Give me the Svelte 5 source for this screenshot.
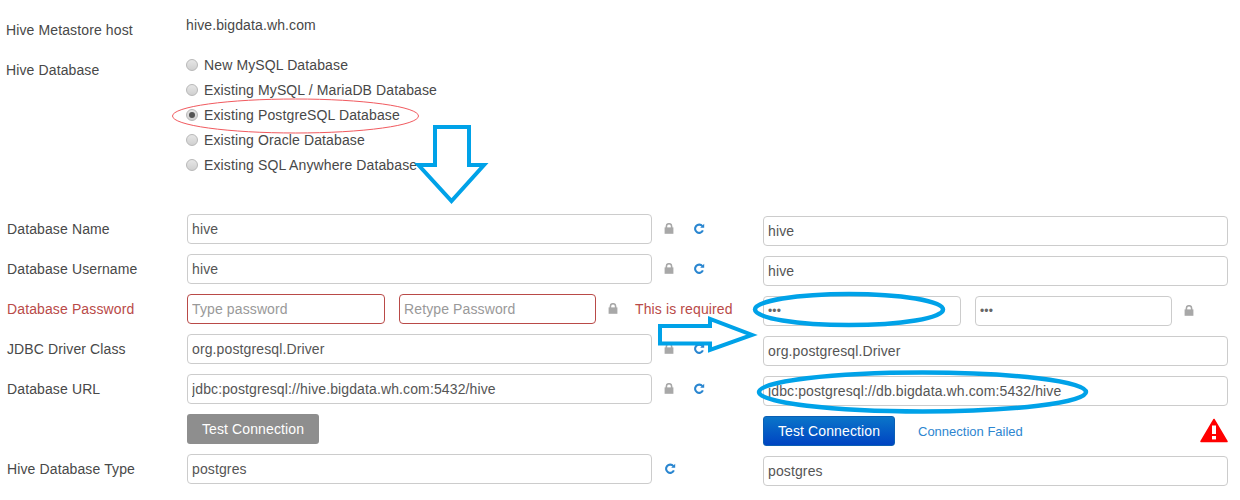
<script>
	const radios = [
		{ label: "New MySQL Database", on: false },
		{ label: "Existing MySQL / MariaDB Database", on: false },
		{ label: "Existing PostgreSQL Database", on: true },
		{ label: "Existing Oracle Database", on: false },
		{ label: "Existing SQL Anywhere Database", on: false },
	];
</script>

{#snippet lock()}
	<svg class="lock" width="10" height="11" viewBox="0 0 10 11">
		<path d="M2.400 5V3.300a2.600 2.600 0 0 1 5.200 0V5" fill="none" stroke="#a8a8a8" stroke-width="1.600" />
		<rect x="0.600" y="4.400" width="8.800" height="6.400" fill="#a8a8a8" />
	</svg>
{/snippet}

{#snippet refresh()}
	<svg class="refresh" width="12" height="12" viewBox="0 0 12 12">
		<path d="M9.400 3.200A4.100 4.100 0 1 0 9.900 7.400" fill="none" stroke="#2a86d0" stroke-width="2.100" />
		<path d="M7.200 4.800L11.200 4.800 11.200 0.800Z" fill="#2a86d0" />
	</svg>
{/snippet}

<div class="page">
	<div class="top">
		<div class="host">
			<span class="top-label">Hive Metastore host</span>
			<span class="host-value">hive.bigdata.wh.com</span>
		</div>
		<div class="db">
			<span class="top-label">Hive Database</span>
			<div class="radios">
				{#each radios as r}
					<div class="radio-row">
						<span class="radio" class:on={r.on}></span>
						<span>{r.label}</span>
					</div>
				{/each}
			</div>
		</div>
	</div>

	<div class="columns">
		<div class="col left">
			<div class="row">
				<span class="label">Database Name</span>
				<input class="field" value="hive" readonly />
				<div class="icons">{@render lock()}{@render refresh()}</div>
			</div>
			<div class="row">
				<span class="label">Database Username</span>
				<input class="field" value="hive" readonly />
				<div class="icons">{@render lock()}{@render refresh()}</div>
			</div>
			<div class="row">
				<span class="label error">Database Password</span>
				<input class="half bad" placeholder="Type password" readonly />
				<input class="half bad second" placeholder="Retype Password" readonly />
				<div class="icons">{@render lock()}</div>
				<span class="required">This is required</span>
			</div>
			<div class="row">
				<span class="label">JDBC Driver Class</span>
				<input class="field" value="org.postgresql.Driver" readonly />
				<div class="icons">{@render lock()}{@render refresh()}</div>
			</div>
			<div class="row">
				<span class="label">Database URL</span>
				<input class="field" value="jdbc:postgresql://hive.bigdata.wh.com:5432/hive" readonly />
				<div class="icons">{@render lock()}{@render refresh()}</div>
			</div>
			<div class="row">
				<span class="label"></span>
				<button class="btn off">Test Connection</button>
			</div>
			<div class="row">
				<span class="label">Hive Database Type</span>
				<input class="field" value="postgres" readonly />
				<div class="icons only">{@render refresh()}</div>
			</div>
		</div>

		<div class="col right">
			<div class="row"><input class="field" value="hive" readonly /></div>
			<div class="row"><input class="field" value="hive" readonly /></div>
			<div class="row">
				<input class="half dots" type="password" value="abc" readonly />
				<input class="half second dots" type="password" value="abc" readonly />
				<div class="icons">{@render lock()}</div>
			</div>
			<div class="row"><input class="field" value="org.postgresql.Driver" readonly /></div>
			<div class="row"><input class="field" value="jdbc:postgresql://db.bigdata.wh.com:5432/hive" readonly /></div>
			<div class="row status">
				<button class="btn primary">Test Connection</button>
				<span class="failed">Connection Failed</span>
				<svg class="warn" width="28" height="25" viewBox="0 0 28 25">
					<path d="M14 1.500L27 23.500H1Z" fill="#f00" stroke="#f00" stroke-width="1.500" stroke-linejoin="round" />
					<rect x="12" y="7.500" width="4" height="8.500" fill="#fff" />
					<rect x="12" y="18" width="4" height="3.400" fill="#fff" />
				</svg>
			</div>
			<div class="row"><input class="field" value="postgres" readonly /></div>
		</div>
	</div>

	<!-- hand drawn annotations on top of the screenshot -->
	<svg class="marks" width="1240" height="500" viewBox="0 0 1240 500">
		<ellipse cx="295.500" cy="116" rx="123" ry="17" fill="none" stroke="#f15a5f" stroke-width="1" />
		<path d="M435 127H469V165H484L451.500 201 418.500 165H435Z" fill="none" stroke="#00a2e8" stroke-width="4" />
		<path d="M660 326H710V319L752 335 710 350V343.500H660Z" fill="none" stroke="#00a2e8" stroke-width="4" />
		<ellipse cx="849" cy="309.500" rx="94" ry="15.500" fill="none" stroke="#00a2e8" stroke-width="4.500" />
		<ellipse cx="922.500" cy="392" rx="163.500" ry="19.500" fill="none" stroke="#00a2e8" stroke-width="4.500" />
	</svg>
</div>

<style>
	:global(body) {
		margin: 0;
		background: #fff;
	}

	.page {
		position: relative;
		width: 1240px;
		height: 500px;
		overflow: hidden;
		font-family: "Liberation Sans", Arial, sans-serif;
		font-size: 14px;
		letter-spacing: 0.12px;
		color: #484848;
	}

	.top {
		padding: 16px 0 0 6px;
		height: 198px;
		box-sizing: border-box;
	}

	.host {
		display: flex;
		height: 37px;
	}

	.top-label {
		width: 180px;
		padding-top: 6px;
	}

	.host-value {
		line-height: 18px;
	}

	.db {
		display: flex;
	}

	.db .top-label {
		padding-top: 9px;
	}

	.radios {
		display: flex;
		flex-direction: column;
		margin-top: -1px;
	}

	.radio-row {
		display: flex;
		align-items: center;
		gap: 6px;
		height: 25px;
		white-space: nowrap;
	}

	.radio {
		width: 12px;
		height: 12px;
		border-radius: 50%;
		box-sizing: border-box;
		border: 1px solid #b8b8b8;
		background: linear-gradient(#e6e6e6, #d0d0d0);
		display: flex;
		align-items: center;
		justify-content: center;
	}

	.radio.on::after {
		content: "";
		width: 6px;
		height: 6px;
		border-radius: 50%;
		background: #555;
	}

	.columns {
		display: flex;
	}

	.col {
		display: flex;
		flex-direction: column;
		gap: 10px;
	}

	.left {
		width: 763px;
		flex: none;
		padding-top: 16px;
	}

	.right {
		width: 465px;
		flex: none;
		padding-top: 18px;
	}

	.row {
		display: flex;
		align-items: center;
		height: 30px;
	}

	.label {
		width: 180px;
		margin-left: 7px;
		flex: none;
	}

	.error {
		color: #b94a48;
	}

	input {
		font: inherit;
		letter-spacing: inherit;
		color: #555;
		height: 30px;
		box-sizing: border-box;
		padding: 0 4px;
		margin: 0;
		border: 1px solid #ccc;
		border-radius: 4px;
		background: #fff;
		outline: none;
		flex: none;
	}

	input::placeholder {
		color: #999;
		opacity: 1;
	}

	.field {
		width: 465px;
	}

	.half {
		width: 198px;
	}

	.second {
		margin-left: 14px;
		width: 197px;
	}

	.dots {
		font-size: 12px;
		color: #666;
	}

	.bad {
		border-color: #b94a48;
	}

	.icons {
		display: flex;
		align-items: center;
		margin-left: 12px;
	}

	.icons.only {
		margin-left: 12px;
	}

	.lock {
		display: block;
		margin-top: -1px;
	}

	.refresh {
		display: block;
		margin-left: 19px;
		margin-top: -1px;
	}

	.only .refresh {
		margin-left: 0;
	}

	.required {
		margin-left: 17px;
		color: #b94a48;
		white-space: nowrap;
	}

	.btn {
		width: 132px;
		height: 30px;
		box-sizing: border-box;
		border: 1px solid transparent;
		border-radius: 3px;
		padding: 0;
		font: inherit;
		letter-spacing: inherit;
		color: #fff;
		flex: none;
	}

	.btn.off {
		background: #8e8e8e;
	}

	.btn.primary {
		background: linear-gradient(#0a75c9, #0044c2);
		border-color: #0a5fb4;
	}

	.failed {
		margin-left: 23px;
		font-size: 13px;
		letter-spacing: 0;
		color: #2e86d0;
	}

	.warn {
		margin-left: auto;
		margin-top: -2px;
	}

	.marks {
		position: absolute;
		left: 0;
		top: 0;
		pointer-events: none;
	}
</style>
